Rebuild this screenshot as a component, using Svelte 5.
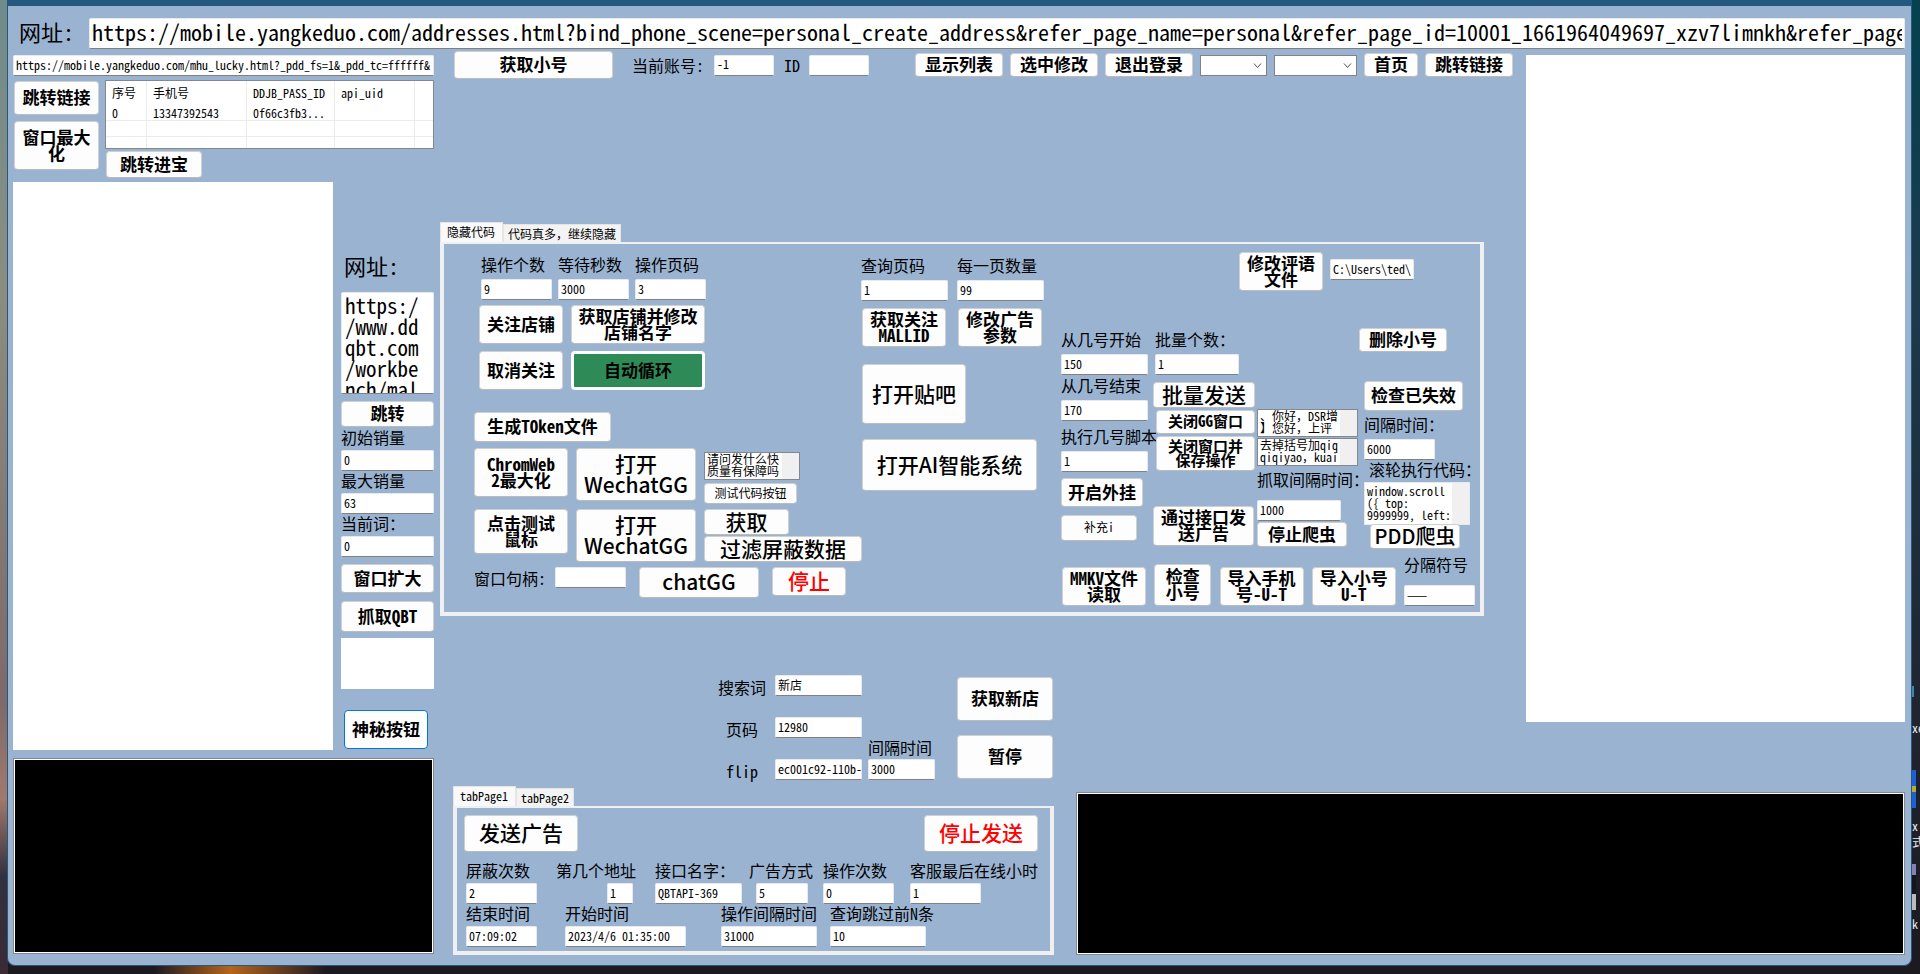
<script lang="ts">
  let pageUrl = $state(
    'https://mobile.yangkeduo.com/addresses.html?bind_phone_scene=personal_create_address&refer_page_name=personal&refer_page_id=10001_1661964049697_xzv7limnkh&refer_page_sn=10001'
  );
  let luckyUrl = $state('https://mobile.yangkeduo.com/mhu_lucky.html?_pdd_fs=1&_pdd_tc=ffffff&');
  let workUrl = $state('https://www.ddqbt.com/workbench/mall');

  let codeTab = $state(0);
  let adTab = $state(0);

  const codeTabs = ['隐藏代码', '代码真多，继续隐藏'];
  const adTabs = ['tabPage1', 'tabPage2'];

  const accounts = [{ id: '0', phone: '13347392543', pass: '0f66c3fb3...', uid: '' }];
</script>

{#snippet field(label: string, value: string, size: string)}
  <label class="field {size}">
    <span>{label}</span>
    <input type="text" {value} />
  </label>
{/snippet}

{#snippet tabs(items: string[], active: number, pick: (i: number) => void)}
  <div class="tabs" role="tablist">
    {#each items as item, i}
      <button type="button" role="tab" class="tab" class:active={active === i} aria-selected={active === i} onclick={() => pick(i)}>
        {item}
      </button>
    {/each}
  </div>
{/snippet}

<div class="desktop">
  <div class="window">
    <label class="url-bar">
      <span>网址:</span>
      <input type="text" bind:value={pageUrl} />
    </label>

    <div class="main">
      <!-- Left side: accounts, browser pane, crawler settings -->
      <section class="left">
        <input class="lucky" type="text" aria-label="链接" bind:value={luckyUrl} />

        <div class="accounts">
          <div class="account-buttons">
            <button type="button" class="jump-link">跳转链接</button>
            <button type="button" class="maximize">窗口最大化</button>
          </div>
          <div class="account-list">
            <table>
              <thead>
                <tr><th>序号</th><th>手机号</th><th>DDJB_PASS_ID</th><th>api_uid</th><th></th></tr>
              </thead>
              <tbody>
                {#each accounts as row}
                  <tr><td>{row.id}</td><td>{row.phone}</td><td>{row.pass}</td><td>{row.uid}</td><td></td></tr>
                {/each}
                {#each Array(2) as _}
                  <tr><td></td><td></td><td></td><td></td><td></td></tr>
                {/each}
              </tbody>
            </table>
            <button type="button" class="treasure">跳转进宝</button>
          </div>
        </div>

        <div class="left-body">
          <div class="pane"></div>
          <div class="crawler">
            <label class="work-url">
              <span>网址:</span>
              <textarea bind:value={workUrl}></textarea>
            </label>
            <button type="button" class="go">跳转</button>
            {@render field('初始销量', '0', 'full')}
            {@render field('最大销量', '63', 'full')}
            {@render field('当前词：', '0', 'full')}
            <button type="button" class="expand">窗口扩大</button>
            <button type="button" class="grab">抓取QBT</button>
            <div class="preview"></div>
            <button type="button" class="mystery">神秘按钮</button>
          </div>
        </div>

        <div class="console"></div>
      </section>

      <section class="right">
        <div class="upper">
          <div class="center">
            <div class="toolbar">
              <button type="button" class="get-small">获取小号</button>
              <label class="inline account">
                <span>当前账号:</span>
                <input type="text" value="-1" />
              </label>
              <label class="inline">
                <span>ID</span>
                <input type="text" value="" />
              </label>
              <div class="toolbar-actions">
                <button type="button">显示列表</button>
                <button type="button">选中修改</button>
                <button type="button">退出登录</button>
                <select class="short" aria-label="账号"><option></option></select>
                <select aria-label="页面"><option></option></select>
                <button type="button">首页</button>
                <button type="button">跳转链接</button>
              </div>
            </div>

            <div class="tab-control code">
              {@render tabs(codeTabs, codeTab, (i) => (codeTab = i))}
              <div class="tab-page code-page">
                <div class="shop">
                  <div class="shop-fields">
                    {@render field('操作个数', '9', 's71')}
                    {@render field('等待秒数', '3000', 's71')}
                    {@render field('操作页码', '3', 's71')}
                  </div>
                  <div class="shop-actions">
                    <button type="button">关注店铺</button>
                    <button type="button">获取店铺并修改<br />店铺名字</button>
                    <button type="button">取消关注</button>
                    <button type="button" class="loop">自动循环</button>
                  </div>
                  <button type="button" class="token">生成TOken文件</button>
                  <div class="chat-grid">
                    <button type="button" class="chrome">ChromWeb<br />2最大化</button>
                    <button type="button" class="big">打开<br />WechatGG</button>
                    <div class="stack wide-gap">
                      <textarea class="list" aria-label="问题">{'请问发什么快\n质量有保障吗'}</textarea>
                      <button type="button" class="small test">测试代码按钮</button>
                    </div>
                    <button type="button" class="mouse">点击测试<br />鼠标</button>
                    <button type="button" class="big">打开<br />WechatGG</button>
                    <div class="stack">
                      <button type="button" class="big fetch">获取</button>
                      <button type="button" class="big filter">过滤屏蔽数据</button>
                    </div>
                  </div>
                  <div class="handle-row">
                    <label class="inline handle">
                      <span>窗口句柄:</span>
                      <input type="text" value="" />
                    </label>
                    <button type="button" class="big chat">chatGG</button>
                    <button type="button" class="big red stop">停止</button>
                  </div>
                </div>

                <div class="query">
                  <div class="query-fields">
                    {@render field('查询页码', '1', 's86')}
                    {@render field('每一页数量', '99', 's86')}
                  </div>
                  <div class="query-actions">
                    <button type="button">获取关注<br />MALLID</button>
                    <button type="button">修改广告<br />参数</button>
                  </div>
                  <button type="button" class="big tieba">打开贴吧</button>
                  <button type="button" class="big ai">打开AI智能系统</button>
                </div>

                <div class="batch">
                  <div class="review-row">
                    <button type="button">修改评语<br />文件</button>
                    <input type="text" aria-label="评语文件" value="C:\Users\ted\" />
                  </div>
                  <div class="batch-columns">
                    <div class="range">
                      {@render field('从几号开始', '150', 's86')}
                      {@render field('从几号结束', '170', 's86')}
                      {@render field('执行几号脚本', '1', 's86 script')}
                      <button type="button" class="plugin">开启外挂</button>
                      <button type="button" class="small extra">补充i</button>
                    </div>
                    <div class="send">
                      {@render field('批量个数：', '1', 's84')}
                      <button type="button" class="big batch-send">批量发送</button>
                      <button type="button" class="mid close-gg">关闭GG窗口</button>
                      <button type="button" class="mid close-save">关闭窗口并<br />保存操作</button>
                      <button type="button" class="api-send">通过接口发<br />送广告</button>
                    </div>
                    <div class="replies">
                      <textarea class="list" aria-label="回复">{'、你好，DSR增\n】您好，上评'}</textarea>
                      <textarea class="list" aria-label="关键词">{'去掉括号加qiq\nqiqiyao，kuai'}</textarea>
                      {@render field('抓取间隔时间：', '1000', 's84 loose')}
                      <button type="button" class="stop-spider">停止爬虫</button>
                    </div>
                    <div class="checks">
                      <button type="button" class="remove">删除小号</button>
                      <button type="button" class="check">检查已失效</button>
                      {@render field('间隔时间：', '6000', 's71')}
                      <label class="scroll-code">
                        <span>滚轮执行代码：</span>
                        <textarea>{'window.scroll\n({ top:\n9999999, left:'}</textarea>
                      </label>
                      <button type="button" class="big pdd">PDD爬虫</button>
                    </div>
                  </div>
                  <div class="import-row">
                    <button type="button">MMKV文件<br />读取</button>
                    <button type="button" class="tall">检查<br />小号</button>
                    <button type="button">导入手机<br />号-U-T</button>
                    <button type="button">导入小号<br />U-T</button>
                    {@render field('分隔符号', '——', 's71 loose')}
                  </div>
                </div>
              </div>
            </div>

            <div class="search">
              <div class="search-fields">
                <label class="inline"><span>搜索词</span><input type="text" value="新店" /></label>
                <label class="inline"><span>页码</span><input type="text" value="12980" /></label>
                <label class="inline"><span>flip</span><input type="text" value="ec001c92-110b-" /></label>
              </div>
              {@render field('间隔时间', '3000', 's67')}
              <div class="search-actions">
                <button type="button">获取新店</button>
                <button type="button">暂停</button>
              </div>
            </div>
          </div>
          <div class="pane side"></div>
        </div>

        <div class="lower">
          <div class="tab-control ads">
            {@render tabs(adTabs, adTab, (i) => (adTab = i))}
            <div class="tab-page ads-page">
              <div class="ads-head">
                <button type="button" class="big">发送广告</button>
                <button type="button" class="big red">停止发送</button>
              </div>
              <div class="ads-row first">
                {@render field('屏蔽次数', '2', 's71')}
                {@render field('第几个地址', '1', 'tiny')}
                {@render field('接口名字：', 'QBTAPI-369', 's86')}
                {@render field('广告方式', '5', 'mode')}
                {@render field('操作次数', '0', 's71')}
                {@render field('客服最后在线小时', '1', 's71')}
              </div>
              <div class="ads-row second">
                {@render field('结束时间', '07:09:02', 's71')}
                {@render field('开始时间', '2023/4/6 01:35:00', 's121')}
                {@render field('操作间隔时间', '31000', 's96')}
                {@render field('查询跳过前N条', '10', 's96')}
              </div>
            </div>
          </div>
          <div class="console wide"></div>
        </div>
      </section>
    </div>
  </div>

  <!-- Desktop shortcuts peeking out from behind the window -->
  <div class="shortcuts" aria-hidden="true">
    <span class="dot"></span>
    <span class="name n1">xe</span>
    <span class="tile blue"></span>
    <span class="name n2">x<br />式</span>
    <span class="tile violet"></span>
    <span class="name n3">k</span>
  </div>
</div>

<style>
  :global(body) {
    margin: 0;
    background: #1f1c24;
  }

  .desktop {
    --form: #99b3d1;
    --frame: #24587f;
    position: relative;
    box-sizing: border-box;
    min-height: 100vh;
    padding: 0 8px 7px 7px;
    overflow: hidden;
    color: #000;
    font-family: 'Noto Sans Mono CJK SC', 'Liberation Mono', 'Noto Sans CJK SC', monospace;
    font-size: 16px;
    line-height: 20px;
    background:
      linear-gradient(90deg, transparent 8%, #b5651d 12%, transparent 17%) 0 100% / 100% 8px no-repeat,
      linear-gradient(180deg, #6f8b8b 0, #8c8d80 30%, #7d6a6a 72%, #a07a6c 82%, #33303f 90%, #3a2b35 100%) 0 0 / 8px 100% no-repeat,
      linear-gradient(180deg, #04414f 0, #1c3a4c 30%, #20242e 75%, #1c191f 100%);
  }

  .window {
    position: relative;
    z-index: 1;
    box-sizing: border-box;
    padding: 12px 6px 9px 5px;
    border: 1px solid var(--frame);
    border-top-width: 6px;
    border-radius: 0 0 8px 8px;
    background: var(--form);
  }

  button,
  input,
  select,
  textarea {
    box-sizing: border-box;
    margin: 0;
    font-family: inherit;
    color: #000;
  }

  button {
    padding: 0 0 2px;
    border: 1px solid #d0d0d0;
    border-bottom-color: #bbb;
    border-radius: 4px;
    background: #fdfdfd;
    font-size: 17px;
    font-weight: 700;
    line-height: 16px;
  }

  input {
    height: 21px;
    padding: 0 0 3px 2px;
    border: 1px solid #e6e9ee;
    border-bottom-color: #808080;
    border-radius: 2px;
    background: #fff;
    font-size: 12px;
  }

  input:focus,
  textarea:focus {
    outline: none;
    border-bottom-color: #0078d4;
  }

  textarea {
    display: block;
    resize: none;
    overflow: hidden;
  }

  span {
    white-space: nowrap;
  }

  .big {
    font-family: 'Noto Sans CJK SC', sans-serif;
    font-size: 21px;
    font-weight: 500;
    line-height: 21px;
  }

  .mid {
    font-size: 15px;
    line-height: 14px;
  }

  .small {
    font-size: 12px;
    font-weight: 400;
  }

  .red {
    color: #f00;
  }

  /* Labelled fields */
  .field {
    display: flex;
    flex-direction: column;
    gap: 3px;
  }

  .field span {
    padding-bottom: 4px;
    line-height: 16px;
  }

  .field.loose {
    gap: 9px;
  }

  .field input {
    width: 100%;
  }

  .s67 {
    width: 67px;
  }

  .s71 {
    width: 71px;
  }

  .s84 {
    width: 84px;
  }

  .s86 {
    width: 87px;
  }

  .s96 {
    width: 96px;
  }

  .s121 {
    width: 121px;
  }

  .inline {
    display: flex;
    align-items: center;
  }

  /* Address bar */
  .url-bar {
    display: flex;
    align-items: center;
    gap: 4px;
    font-size: 22px;
  }

  .url-bar span {
    width: 66px;
    padding: 0 0 6px 6px;
  }

  .url-bar input {
    flex: 1;
    min-width: 0;
    height: 31px;
    padding: 0 2px 5px;
    font-size: 22px;
  }

  .main {
    display: flex;
    gap: 6px;
    margin-top: 2px;
  }

  /* Left side */
  .left {
    flex: none;
    display: flex;
    flex-direction: column;
    width: 421px;
    padding-top: 4px;
  }

  .accounts {
    display: flex;
    gap: 6px;
    margin-top: 4px;
  }

  .account-buttons {
    display: flex;
    flex-direction: column;
    gap: 6px;
    width: 85px;
    padding: 1px 0 0 1px;
  }

  .jump-link {
    height: 34px;
  }

  .maximize {
    height: 49px;
    padding: 0 6px 2px;
  }

  .account-list {
    flex: 1;
  }

  table {
    width: 100%;
    table-layout: fixed;
    border: 1px solid #828790;
    border-spacing: 0;
    background: #fff;
    font-size: 12px;
  }

  th,
  td {
    height: 15px;
    padding: 0 0 0 6px;
    border-right: 1px solid #ececec;
    border-bottom: 1px solid #ececec;
    font-weight: 400;
    line-height: 14px;
    text-align: left;
    white-space: nowrap;
  }

  th {
    height: 24px;
    border-bottom: none;
  }

  th:last-child,
  td:last-child {
    border-right: none;
  }

  tbody tr:last-child td {
    height: 11px;
    border-bottom: none;
  }

  th:nth-child(1) {
    width: 34px;
  }

  th:nth-child(2) {
    width: 93px;
  }

  th:nth-child(3) {
    width: 81px;
  }

  th:nth-child(4) {
    width: 73px;
  }

  .treasure {
    width: 96px;
    height: 27px;
    margin: 2px 0 0 1px;
  }

  .left-body {
    display: flex;
    gap: 8px;
    margin: 4px 0 8px;
  }

  .pane {
    width: 320px;
    height: 568px;
    background: #fff;
  }

  .crawler {
    flex: 1;
    display: flex;
    flex-direction: column;
    padding-top: 72px;
  }

  .crawler .field {
    gap: 1px;
    margin-bottom: 1px;
  }

  .work-url {
    font-size: 22px;
  }

  .work-url span {
    display: block;
    height: 38px;
    padding-left: 3px;
    line-height: 22px;
  }

  .work-url textarea {
    width: 100%;
    height: 102px;
    padding: 2px 9px 2px 3px;
    border: 1px solid #e6e9ee;
    border-bottom-color: #808080;
    border-radius: 2px;
    font-size: 21px;
    line-height: 21px;
    line-break: anywhere;
  }

  .go {
    height: 26px;
    margin: 7px 0 2px;
  }

  .expand {
    height: 29px;
    margin-top: 6px;
  }

  .grab {
    height: 31px;
    margin-top: 8px;
  }

  .preview {
    height: 51px;
    margin-top: 6px;
    background: #fff;
  }

  .mystery {
    width: 84px;
    height: 39px;
    margin: 21px 0 0 3px;
    border-color: #0078d4;
  }

  .console {
    flex: 1;
    box-sizing: border-box;
    min-height: 196px;
    margin-bottom: 2px;
    border: 1px solid #828790;
    outline: 1px solid #fff;
    outline-offset: -2px;
    background: #000;
  }

  .console.wide {
    min-height: 163px;
    margin: 6px 0 1px;
  }

  /* Right side */
  .right {
    flex: 1;
    min-width: 0;
  }

  .upper {
    display: flex;
  }

  .center {
    flex: 1;
    min-width: 0;
  }

  .pane.side {
    flex: none;
    width: 379px;
    height: 667px;
    margin-top: 4px;
  }

  .toolbar {
    display: flex;
    align-items: center;
    margin: 0 13px 143px 14px;
    height: 28px;
  }

  .get-small {
    width: 159px;
    height: 28px;
    margin-right: 19px;
  }

  .toolbar .inline {
    margin-right: 10px;
  }

  .toolbar .inline span {
    width: 25px;
  }

  .toolbar .account span {
    width: 82px;
  }

  .toolbar .inline input {
    width: 60px;
  }

  .toolbar-actions {
    flex: 1;
    display: flex;
    align-items: center;
    gap: 7px;
    margin-left: 36px;
  }

  .toolbar-actions button {
    height: 24px;
    padding: 0 9px 2px;
  }

  .toolbar-actions select {
    flex: 1;
    height: 21px;
    border: 1px solid #828282;
    appearance: none;
    background: #fff
      url("data:image/svg+xml,%3Csvg xmlns='http://www.w3.org/2000/svg' width='9' height='9' fill='none' stroke='%23555'%3E%3Cpath d='M1 2.5 4.5 6.5 8 2.5'/%3E%3C/svg%3E")
      no-repeat right 4px center;
  }

  .toolbar-actions .short {
    flex: none;
    width: 67px;
  }

  /* Tab controls */
  .tabs {
    display: flex;
    align-items: flex-end;
    height: 20px;
  }

  .tab {
    height: 18px;
    padding: 0 4px;
    border: 1px solid #e5e5e5;
    border-bottom: none;
    border-radius: 0;
    background: #f3f3f3;
    font-size: 12px;
    font-weight: 400;
  }

  .tab.active {
    height: 20px;
    padding: 0 7px 2px 6px;
    background: #f9f9f9;
  }

  .tab-page {
    border: 4px solid #f0f0f0;
    border-top-width: 2px;
  }

  .code {
    margin-right: 42px;
  }

  .code-page {
    display: flex;
    padding: 8px 5px 6px 30px;
  }

  .shop {
    flex: none;
    width: 387px;
    padding-top: 4px;
  }

  .shop-fields {
    display: flex;
    gap: 6px;
    margin-left: 7px;
  }

  .shop-actions {
    display: grid;
    grid-template: 39px 39px / 84px 134px;
    gap: 7px 8px;
    margin: 5px 0 22px 5px;
  }

  .loop {
    border: 3px solid #fdfdfd;
    background: #2e8b57;
  }

  .token {
    width: 137px;
    height: 30px;
  }

  .chat-grid {
    display: grid;
    grid-template: 53px 53px / 94px 120px 158px;
    gap: 8px;
    margin: 6px 0 5px;
  }

  .chrome {
    height: 49px;
  }

  .mouse {
    height: 45px;
  }

  .stack {
    display: flex;
    flex-direction: column;
    align-items: flex-start;
    gap: 1px;
  }

  .wide-gap {
    gap: 3px;
    padding-top: 4px;
    margin-bottom: -3px;
  }

  .list {
    width: 96px;
    height: 28px;
    padding: 0 2px 2px;
    border: 1px solid #828790;
    background: linear-gradient(#f0f0f0, #f0f0f0) right / 17px 100% no-repeat #fff;
    font-size: 12px;
    line-height: 12px;
    white-space: pre;
  }

  .test {
    width: 93px;
    height: 21px;
  }

  .fetch {
    width: 85px;
    height: 26px;
  }

  .filter {
    width: 158px;
    height: 26px;
  }

  .handle-row {
    display: flex;
    align-items: flex-start;
    gap: 13px;
  }

  .handle span {
    width: 81px;
  }

  .handle input {
    width: 71px;
  }

  .chat {
    width: 120px;
    height: 31px;
  }

  .stop {
    width: 74px;
    height: 29px;
  }

  .query {
    flex: 1;
    padding-top: 5px;
  }

  .query-fields {
    display: flex;
    gap: 9px;
  }

  .query-actions {
    display: flex;
    gap: 12px;
    margin: 7px 0 17px 1px;
  }

  .query-actions button,
  .review-row button,
  .import-row button {
    width: 84px;
    height: 39px;
  }

  .tieba {
    display: block;
    width: 104px;
    height: 60px;
    margin: 0 0 15px 1px;
  }

  .ai {
    width: 175px;
    height: 52px;
    margin-left: 1px;
  }

  .batch {
    flex: none;
    width: 414px;
  }

  .review-row {
    display: flex;
    align-items: center;
    justify-content: flex-end;
    gap: 7px;
    padding-right: 61px;
  }

  .review-row input {
    width: 84px;
    margin-bottom: 4px;
  }

  .batch-columns {
    display: flex;
    align-items: flex-start;
    height: 220px;
    margin-top: 37px;
  }

  .batch-columns > div {
    flex: none;
    display: flex;
    flex-direction: column;
    align-items: flex-start;
  }

  .range {
    width: 92px;
    padding-top: 3px;
    gap: 2px;
  }

  .range .script {
    padding-top: 5px;
  }

  .plugin {
    width: 82px;
    height: 29px;
    margin: 4px 0 6px;
  }

  .extra {
    width: 76px;
    height: 26px;
  }

  .send {
    width: 104px;
    padding-top: 3px;
    gap: 2px;
  }

  .send .field {
    margin-left: 2px;
  }

  .batch-send {
    width: 102px;
    height: 26px;
    margin-top: 5px;
  }

  .close-gg,
  .close-save {
    align-self: flex-end;
    width: 99px;
    height: 24px;
    margin-right: 2px;
  }

  .close-save {
    height: 35px;
  }

  .api-send {
    width: 101px;
    height: 40px;
    margin-top: 33px;
  }

  .replies {
    width: 102px;
    padding-top: 81px;
    gap: 1px;
  }

  .replies .list {
    width: 101px;
  }

  .replies .field {
    padding-top: 4px;
  }

  .stop-spider {
    width: 90px;
    height: 25px;
  }

  .checks .field,
  .checks .check,
  .checks .scroll-code {
    margin-left: 5px;
  }

  .remove {
    width: 88px;
    height: 24px;
  }

  .check {
    width: 99px;
    height: 30px;
    margin: 29px 0 5px;
  }

  .scroll-code textarea {
    width: 106px;
    height: 43px;
    padding: 2px 2px 0;
    border: 1px solid #e6e9ee;
    background: linear-gradient(#f0f0f0, #f0f0f0) right / 17px 100% no-repeat #fff;
    font-size: 12px;
    line-height: 12px;
    white-space: pre;
  }

  .scroll-code span {
    display: block;
    padding: 1px 0 5px 5px;
    line-height: 16px;
  }

  .checks .pdd {
    width: 90px;
    height: 25px;
    margin: -1px 0 0 11px;
    font-size: 20px;
  }

  .import-row {
    display: flex;
    align-items: flex-end;
    justify-content: space-between;
    margin: 8px 0 0 1px;
  }

  .import-row .tall {
    width: 57px;
    height: 42px;
  }

  /* Shop search */
  .search {
    display: flex;
    align-items: center;
    margin: 59px 0 6px 278px;
  }

  .search-fields {
    display: flex;
    flex-direction: column;
    gap: 21px;
    margin-right: 6px;
  }

  .search-fields span {
    width: 48px;
    padding-top: 4px;
    margin-right: 9px;
    line-height: 17px;
    text-align: center;
  }

  .search-fields input {
    width: 87px;
  }

  .search .field {
    align-self: flex-end;
    gap: 0;
    margin-right: 22px;
  }

  .search-actions {
    display: flex;
    flex-direction: column;
    gap: 14px;
  }

  .search-actions button {
    width: 96px;
    height: 44px;
  }

  /* Ad sending */
  .lower {
    display: flex;
    gap: 22px;
    margin-left: 13px;
  }

  .ads {
    flex: none;
    width: 601px;
  }

  .ads-page {
    padding: 7px 7px 4px;
  }

  .ads-head {
    display: flex;
    justify-content: space-between;
    margin: 0 5px 10px 0;
  }

  .ads-head button {
    width: 114px;
    height: 37px;
  }

  .ads-row {
    display: grid;
    margin-left: 2px;
  }

  .ads-row .field {
    gap: 1px;
  }

  .first {
    grid-template-columns: 90px 99px 94px 74px 87px 1fr;
    margin-bottom: 1px;
  }

  .second {
    grid-template-columns: 99px 156px 109px 1fr;
  }

  .tiny {
    width: 77px;
  }

  .tiny input {
    align-self: flex-end;
    width: 26px;
  }

  .mode {
    width: 66px;
  }

  .mode input {
    align-self: center;
    width: 52px;
  }

  /* Shortcuts on the desktop edge */
  .shortcuts {
    position: absolute;
    top: 0;
    right: 0;
    bottom: 0;
    width: 8px;
    overflow: hidden;
    color: #eee;
    font-size: 12px;
    line-height: 16px;
  }

  .shortcuts span {
    position: absolute;
    left: 0;
  }

  .dot {
    top: 686px;
    width: 2px;
    height: 11px;
    background: #3d86a8;
  }

  .n1 {
    top: 720px;
  }

  .n2 {
    top: 818px;
  }

  .n3 {
    top: 916px;
  }

  .tile {
    width: 4px;
    height: 38px;
  }

  .blue {
    top: 770px;
    background: linear-gradient(#1f5fd6 42%, #b5b02c 42% 58%, #1f5fd6 58%);
  }

  .violet {
    top: 864px;
    height: 46px;
    background: linear-gradient(#8a7fb5 24%, #15131c 24% 66%, #bbb 66%);
  }
</style>
